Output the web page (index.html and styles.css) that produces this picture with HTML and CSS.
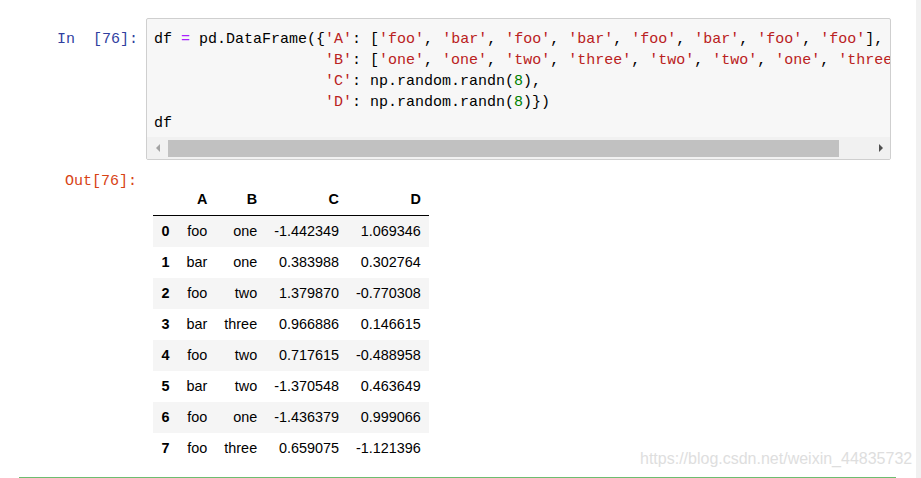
FILE: index.html
```html
<!DOCTYPE html>
<html>
<head>
<meta charset="utf-8">
<link rel="stylesheet" href="styles.css">
</head>
<body>
<div class="page">
  <div class="main">
    <div class="cell">
      <div class="row input-row">
        <div class="prompt in-prompt">In&nbsp;&nbsp;[76]:</div>
        <div class="input-box">
          <div class="code">
<div class="line">df <span class="o">=</span> pd.DataFrame({<span class="s">'A'</span>: [<span class="s">'foo'</span>, <span class="s">'bar'</span>, <span class="s">'foo'</span>, <span class="s">'bar'</span>, <span class="s">'foo'</span>, <span class="s">'bar'</span>, <span class="s">'foo'</span>, <span class="s">'foo'</span>],</div>
<div class="line">                   <span class="s">'B'</span>: [<span class="s">'one'</span>, <span class="s">'one'</span>, <span class="s">'two'</span>, <span class="s">'three'</span>, <span class="s">'two'</span>, <span class="s">'two'</span>, <span class="s">'one'</span>, <span class="s">'three'</span>],</div>
<div class="line">                   <span class="s">'C'</span>: np.random.randn(<span class="n">8</span>),</div>
<div class="line">                   <span class="s">'D'</span>: np.random.randn(<span class="n">8</span>)})</div>
<div class="line">df</div>
          </div>
          <div class="hscroll">
            <div class="sbtn sbtn-left"><span class="tri-left"></span></div>
            <div class="strack"><div class="sthumb"></div></div>
            <div class="sbtn sbtn-right"><span class="tri-right"></span></div>
          </div>
        </div>
      </div>
      <div class="row output-row">
        <div class="prompt out-prompt">Out[76]:</div>
        <div class="output">
          <table class="df">
            <thead>
              <tr><th></th><th>A</th><th>B</th><th>C</th><th>D</th></tr>
            </thead>
            <tbody>
              <tr><th>0</th><td>foo</td><td>one</td><td>-1.442349</td><td>1.069346</td></tr>
              <tr><th>1</th><td>bar</td><td>one</td><td>0.383988</td><td>0.302764</td></tr>
              <tr><th>2</th><td>foo</td><td>two</td><td>1.379870</td><td>-0.770308</td></tr>
              <tr><th>3</th><td>bar</td><td>three</td><td>0.966886</td><td>0.146615</td></tr>
              <tr><th>4</th><td>foo</td><td>two</td><td>0.717615</td><td>-0.488958</td></tr>
              <tr><th>5</th><td>bar</td><td>two</td><td>-1.370548</td><td>0.463649</td></tr>
              <tr><th>6</th><td>foo</td><td>one</td><td>-1.436379</td><td>0.999066</td></tr>
              <tr><th>7</th><td>foo</td><td>three</td><td>0.659075</td><td>-1.121396</td></tr>
            </tbody>
          </table>
        </div>
      </div>
    </div>
    <div class="watermark">https://blog.csdn.net/weixin_44835732</div>
  </div>
  <div class="strip"></div>
</div>
</body>
</html>
```
FILE: styles.css
```css
html, body {
  margin: 0;
  padding: 0;
  background: #ffffff;
}

.page {
  width: 921px;
  height: 478px;
  display: flex;
  overflow: hidden;
}

.main {
  position: relative;
  width: 916px;
  height: 478px;
  padding-left: 19px;
  box-sizing: border-box;
}

.strip {
  width: 5px;
  height: 478px;
  background: #f1f1f1;
}

.cell {
  width: 877px;
  height: 478px;
  box-sizing: border-box;
  padding-top: 18px;
  border-bottom: 1px solid #6dbd70;
}

.row {
  display: flex;
  align-items: flex-start;
}

.prompt {
  width: 127px;
  flex: none;
  box-sizing: border-box;
  padding-right: 9px;
  text-align: right;
  font-family: "Liberation Mono", monospace;
  font-size: 15px;
  line-height: 21px;
  white-space: pre;
}

.in-prompt {
  color: #303f9f;
  padding-top: 11px;
  padding-right: 8px;
}

.out-prompt {
  color: #d84315;
  padding-top: 3px;
}

.input-box {
  width: 745px;
  flex: none;
  box-sizing: border-box;
  border: 1px solid #cfcfcf;
  border-radius: 2px;
  background: #f7f7f7;
  overflow: hidden;
}

.code {
  padding: 10px 0 3px 7px;
  overflow: hidden;
  font-family: "Liberation Mono", monospace;
  font-size: 15px;
  line-height: 21px;
  color: #000000;
}

.line {
  white-space: pre;
  height: 21px;
}

.o { color: #aa22ff; }
.s { color: #ba2121; }
.n { color: #008000; }

.hscroll {
  display: flex;
  height: 22px;
  background: #f1f1f1;
}

.sbtn {
  flex: none;
  width: 21px;
  display: flex;
  align-items: center;
  justify-content: center;
}

.strack {
  flex: 1;
  display: flex;
  align-items: center;
  padding-right: 28px;
}

.sthumb {
  width: 671px;
  height: 17px;
  background: #c1c1c1;
}

.tri-left {
  width: 0;
  height: 0;
  border-top: 4px solid transparent;
  border-bottom: 4px solid transparent;
  border-right: 4px solid #a3a3a3;
}

.tri-right {
  width: 0;
  height: 0;
  border-top: 4px solid transparent;
  border-bottom: 4px solid transparent;
  border-left: 4px solid #505050;
  margin-left: 2px;
}

.output-row {
  margin-top: 8px;
}

.output {
  padding-left: 7px;
  padding-top: 16px;
}

.df {
  border-collapse: collapse;
  font-family: "Liberation Sans", Arial, sans-serif;
  font-size: 14.4px;
  color: #000000;
}

.df th,
.df td {
  padding: 7px 8.5px;
  line-height: 17px;
  text-align: right;
  vertical-align: middle;
  white-space: nowrap;
}

.df th {
  font-weight: bold;
}

.df td {
  font-weight: normal;
}

.df thead th {
  border-bottom: 1px solid #000000;
}

.df tbody tr:nth-child(odd) {
  background: #f5f5f5;
}

.watermark {
  position: absolute;
  left: 640px;
  top: 450px;
  font-family: "Liberation Sans", Arial, sans-serif;
  font-size: 16px;
  line-height: 18px;
  color: #dedede;
  white-space: nowrap;
}
```
